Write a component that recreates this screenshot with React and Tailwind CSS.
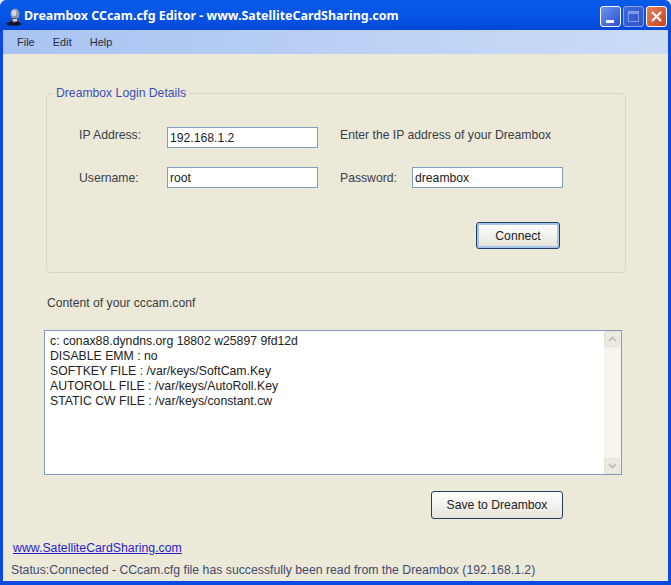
import React from "react";

function AppIcon() {
  return (
    <svg width="18" height="18" viewBox="0 0 18 18" aria-hidden>
      <ellipse cx="10" cy="6" rx="4.500" ry="5.500" fill="#8d96a8" />
      <ellipse cx="9" cy="5" rx="2.500" ry="3" fill="#d5dae2" />
      <path d="M5 15c0-3 2-5 5-5s5 2 5 5z" fill="#4e5668" />
      <path d="M1 16l5-3 3 2 3-2 5 3-3 1.500H4z" fill="#10151f" />
      <rect x="8" y="11" width="4" height="2.500" fill="#c9ced8" />
    </svg>
  );
}

function WindowButtons() {
  return (
    <div className="flex gap-[2px]">
      <div className="flex h-[21px] w-[21px] items-end rounded-[3px] border border-white bg-gradient-to-br from-[#6f95ec] to-[#2a4fd0] pb-[3px] pl-[5px]">
        <div className="h-[3px] w-[8px] bg-white" />
      </div>
      <div className="flex h-[21px] w-[21px] items-center justify-center rounded-[3px] border border-[#8aa6ea] bg-gradient-to-br from-[#3f68dc] to-[#2f55cc]">
        <div className="h-[11px] w-[11px] border border-[#7f9ae6] border-t-[3px]" />
      </div>
      <div className="flex h-[21px] w-[21px] items-center justify-center rounded-[3px] border border-white bg-gradient-to-br from-[#e8805c] to-[#c8401c]">
        <svg width="13" height="13" viewBox="0 0 13 13" aria-hidden>
          <path d="M2 2l9 9M11 2l-9 9" stroke="#fff" strokeWidth="2.200" />
        </svg>
      </div>
    </div>
  );
}

function Chevron({ up }) {
  return (
    <div className="flex h-[16px] w-[16px] items-center justify-center rounded-[2px] border border-[#e3e1d6] bg-[#ecebe3]">
      <svg width="9" height="6" viewBox="0 0 9 6" aria-hidden>
        <path d={up ? "M1 5l3.500-3.500L8 5" : "M1 1l3.500 3.500L8 1"} fill="none" stroke="#c4c3b8" strokeWidth="2" />
      </svg>
    </div>
  );
}

const inputCls =
  "h-[21px] border border-[#7f9db9] bg-white px-[2px] text-[12.2px] text-[#222] outline-none";

export default function App() {
  return (
    <div className="h-[585px] w-[671px] overflow-hidden bg-[#dfe3ee]">
      <div className="flex h-[585px] w-[671px] flex-col overflow-hidden rounded-t-[7px] bg-[#0a4ae0] font-['Liberation_Sans',Arial,sans-serif] text-[12.2px] text-[#3a3d48]">
        {/* title bar */}
        <div className="flex h-[30px] shrink-0 items-center bg-gradient-to-b from-[#0a5ae8] via-[#0555e6] to-[#0448d8] pt-[3px] pl-[5px] pr-[4px]">
          <AppIcon />
          <span className="ml-[1px] font-['Noto_Sans',sans-serif] text-[12.45px] font-bold whitespace-nowrap text-white">
            Dreambox CCcam.cfg Editor - www.SatelliteCardSharing.com
          </span>
          <div className="ml-auto">
            <WindowButtons />
          </div>
        </div>

        <div className="mb-[4px] ml-[3px] mr-[3px] flex min-h-0 flex-1 flex-col">
          {/* menu */}
          <div className="flex h-[24px] shrink-0 items-center gap-[18px] bg-gradient-to-r from-[#a9c3f2] to-[#cbdcf6] pl-[14px] text-[11px] text-[#2c2c3c]">
            <span>File</span>
            <span>Edit</span>
            <span>Help</span>
          </div>

          <div className="flex min-h-0 flex-1 flex-col bg-[#ece9d8]">
            {/* login group */}
            <fieldset className="mt-[30px] ml-[43px] h-[189px] w-[580px] rounded-[5px] border border-[#d6d3c0] pl-[32px]">
              <legend className="-ml-[27px] px-[4px] text-[12.2px] text-[#3c4fb8]">Dreambox Login Details</legend>
              <div className="mt-[25px] flex items-center">
                <span className="w-[88px] -translate-y-[3px]">IP Address:</span>
                <input readOnly value="192.168.1.2" className={`${inputCls} w-[151px]`} />
                <span className="ml-[22px] -translate-y-[3px]">Enter the IP address of your Dreambox</span>
              </div>
              <div className="mt-[19px] flex items-center">
                <span className="w-[88px]">Username:</span>
                <input readOnly value="root" className={`${inputCls} w-[151px]`} />
                <span className="ml-[22px] w-[72px]">Password:</span>
                <input readOnly value="dreambox" className={`${inputCls} w-[151px]`} />
              </div>
              <button className="mt-[34px] ml-[397px] block h-[27px] w-[84px] rounded-[3px] border border-[#1d3f66] bg-gradient-to-b from-white to-[#e6e4da] text-[12.2px] text-[#222] shadow-[inset_0_0_0_2px_#a9c4ea]">
                Connect
              </button>
            </fieldset>

            <div className="mt-[23px] ml-[44px] leading-[14px]">Content of your cccam.conf</div>

            {/* config text */}
            <div className="mt-[20px] ml-[41px] flex h-[145px] w-[578px] border border-[#7f9db9] bg-white">
              <div className="flex-1 pt-[3px] pl-[5px] text-[12.25px] leading-[14.9px] text-[#222]">
                <div>c: conax88.dyndns.org 18802 w25897 9fd12d</div>
                <div>DISABLE EMM : no</div>
                <div>SOFTKEY FILE : /var/keys/SoftCam.Key</div>
                <div>AUTOROLL FILE : /var/keys/AutoRoll.Key</div>
                <div>STATIC CW FILE : /var/keys/constant.cw</div>
              </div>
              <div className="flex w-[17px] flex-col justify-between bg-[#f5f4ee]">
                <Chevron up />
                <Chevron />
              </div>
            </div>

            <button className="mt-[16px] ml-[428px] h-[28px] w-[132px] shrink-0 rounded-[3px] border border-[#1d3f66] bg-gradient-to-b from-white to-[#e6e4da] text-[12.2px] text-[#222]">
              Save to Dreambox
            </button>

            <a href="#" className="mt-[22px] ml-[10px] w-fit text-[12.3px] leading-[14px] text-[#2a1fd0] underline">
              www.SatelliteCardSharing.com
            </a>
            <div className="mt-[8px] ml-[8px] text-[12.27px] leading-[14px] whitespace-nowrap text-[#3f4a70]">
              Status:Connected - CCcam.cfg file has successfully been read from the Dreambox (192.168.1.2)
            </div>
          </div>
        </div>
      </div>
    </div>
  );
}
